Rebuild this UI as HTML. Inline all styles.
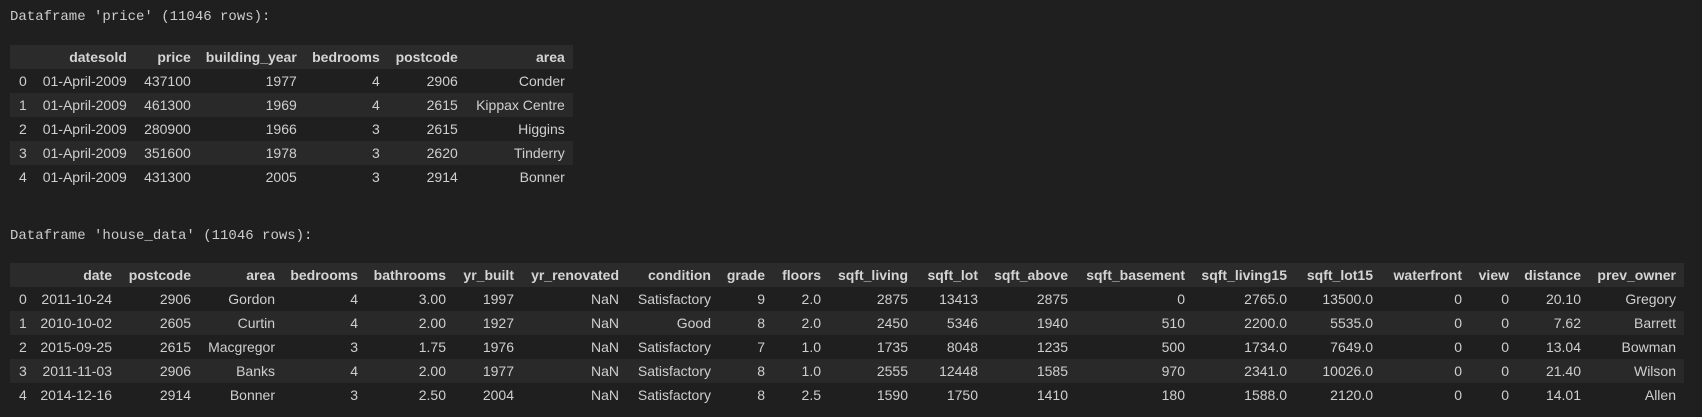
<!DOCTYPE html>
<html><head><meta charset="utf-8"><style>
html,body{margin:0;padding:0;background:#1f1f1f;width:1702px;height:417px;overflow:hidden}
.t{position:absolute;left:10px;font-family:"Liberation Mono",monospace;font-size:14px;color:#cccccc;line-height:16px}
table{position:absolute;border-collapse:collapse;table-layout:fixed;font-family:"Liberation Sans",sans-serif;font-size:14px;color:#cfcfcf}
td,th{height:24px;padding:0 8px 0 0;text-align:right;white-space:nowrap;overflow:hidden;box-sizing:border-box}
th{font-weight:bold;color:#d4d4d4}
thead tr{background:#2b2b2b}
tbody tr:nth-child(even){background:#292929}
td.i{text-align:left;padding-left:9px}
</style></head><body>
<div class="t" style="top:9px">Dataframe 'price' (11046 rows):</div>
<table style="left:10px;top:45px">
<colgroup><col style="width:24px"><col style="width:100px"><col style="width:64px"><col style="width:106px"><col style="width:83px"><col style="width:78px"><col style="width:107px"></colgroup>
<thead><tr><th></th><th>datesold</th><th>price</th><th>building_year</th><th>bedrooms</th><th>postcode</th><th>area</th></tr></thead>
<tbody>
<tr><td class="i">0</td><td>01-April-2009</td><td>437100</td><td>1977</td><td>4</td><td>2906</td><td>Conder</td></tr>
<tr><td class="i">1</td><td>01-April-2009</td><td>461300</td><td>1969</td><td>4</td><td>2615</td><td>Kippax Centre</td></tr>
<tr><td class="i">2</td><td>01-April-2009</td><td>280900</td><td>1966</td><td>3</td><td>2615</td><td>Higgins</td></tr>
<tr><td class="i">3</td><td>01-April-2009</td><td>351600</td><td>1978</td><td>3</td><td>2620</td><td>Tinderry</td></tr>
<tr><td class="i">4</td><td>01-April-2009</td><td>431300</td><td>2005</td><td>3</td><td>2914</td><td>Bonner</td></tr>
</tbody></table>
<div class="t" style="top:228px">Dataframe 'house_data' (11046 rows):</div>
<table style="left:10px;top:263px">
<colgroup><col style="width:26px"><col style="width:84px"><col style="width:79px"><col style="width:84px"><col style="width:83px"><col style="width:88px"><col style="width:68px"><col style="width:105px"><col style="width:92px"><col style="width:54px"><col style="width:56px"><col style="width:87px"><col style="width:70px"><col style="width:90px"><col style="width:117px"><col style="width:102px"><col style="width:86px"><col style="width:89px"><col style="width:47px"><col style="width:72px"><col style="width:95px"></colgroup>
<thead><tr><th></th><th>date</th><th>postcode</th><th>area</th><th>bedrooms</th><th>bathrooms</th><th>yr_built</th><th>yr_renovated</th><th>condition</th><th>grade</th><th>floors</th><th>sqft_living</th><th>sqft_lot</th><th>sqft_above</th><th>sqft_basement</th><th>sqft_living15</th><th>sqft_lot15</th><th>waterfront</th><th>view</th><th>distance</th><th>prev_owner</th></tr></thead>
<tbody>
<tr><td class="i">0</td><td>2011-10-24</td><td>2906</td><td>Gordon</td><td>4</td><td>3.00</td><td>1997</td><td>NaN</td><td>Satisfactory</td><td>9</td><td>2.0</td><td>2875</td><td>13413</td><td>2875</td><td>0</td><td>2765.0</td><td>13500.0</td><td>0</td><td>0</td><td>20.10</td><td>Gregory</td></tr>
<tr><td class="i">1</td><td>2010-10-02</td><td>2605</td><td>Curtin</td><td>4</td><td>2.00</td><td>1927</td><td>NaN</td><td>Good</td><td>8</td><td>2.0</td><td>2450</td><td>5346</td><td>1940</td><td>510</td><td>2200.0</td><td>5535.0</td><td>0</td><td>0</td><td>7.62</td><td>Barrett</td></tr>
<tr><td class="i">2</td><td>2015-09-25</td><td>2615</td><td>Macgregor</td><td>3</td><td>1.75</td><td>1976</td><td>NaN</td><td>Satisfactory</td><td>7</td><td>1.0</td><td>1735</td><td>8048</td><td>1235</td><td>500</td><td>1734.0</td><td>7649.0</td><td>0</td><td>0</td><td>13.04</td><td>Bowman</td></tr>
<tr><td class="i">3</td><td>2011-11-03</td><td>2906</td><td>Banks</td><td>4</td><td>2.00</td><td>1977</td><td>NaN</td><td>Satisfactory</td><td>8</td><td>1.0</td><td>2555</td><td>12448</td><td>1585</td><td>970</td><td>2341.0</td><td>10026.0</td><td>0</td><td>0</td><td>21.40</td><td>Wilson</td></tr>
<tr><td class="i">4</td><td>2014-12-16</td><td>2914</td><td>Bonner</td><td>3</td><td>2.50</td><td>2004</td><td>NaN</td><td>Satisfactory</td><td>8</td><td>2.5</td><td>1590</td><td>1750</td><td>1410</td><td>180</td><td>1588.0</td><td>2120.0</td><td>0</td><td>0</td><td>14.01</td><td>Allen</td></tr>
</tbody></table>
</body></html>
